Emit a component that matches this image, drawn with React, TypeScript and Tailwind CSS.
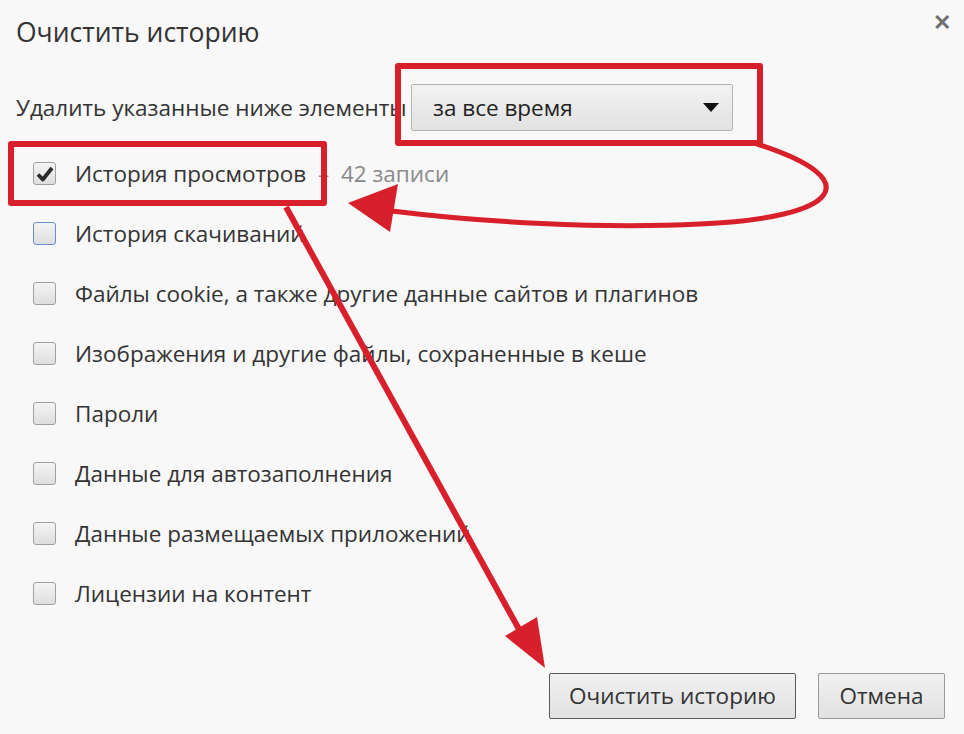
import { useState } from "react";

const items = [
  "История просмотров",
  "История скачиваний",
  "Файлы cookie, а также другие данные сайтов и плагинов",
  "Изображения и другие файлы, сохраненные в кеше",
  "Пароли",
  "Данные для автозаполнения",
  "Данные размещаемых приложений",
  "Лицензии на контент",
];

function Checkbox({ checked, focused }: { checked: boolean; focused?: boolean }) {
  return (
    <span
      className={`flex h-[23px] w-[23px] shrink-0 items-center justify-center rounded-[3px] border bg-linear-to-b from-[#f4f4f4] to-[#dedede] ${
        focused ? "border-[#6a8ccf]" : "border-[#a0a0a0]"
      }`}
    >
      {checked && (
        <svg width="18" height="16" viewBox="0 0 18 16">
          <path d="M2 8.5 L6.8 13.5 L16 2" fill="none" stroke="#2b2b2b" strokeWidth="3.8" strokeLinejoin="round" />
        </svg>
      )}
    </span>
  );
}

export default function App() {
  const [checked, setChecked] = useState<boolean[]>([true, false, false, false, false, false, false, false]);

  return (
    <div
      className="relative h-[734px] w-[964px] overflow-hidden bg-[#f8f8f8] text-[#333]"
      style={{ fontFamily: '"Open Sans", "Noto Sans", sans-serif' }}
    >
      <div className="flex h-full flex-col px-4 pt-[12px]">
        {/* Header */}
        <div className="flex items-start justify-between">
          <h1 className="text-[26.5px] font-normal leading-[40px] text-[#333]">Очистить историю</h1>
          <button className="mr-[-3px] mt-[-2px] text-[22px] font-bold leading-none text-[#707070]">✕</button>
        </div>

        {/* Time range */}
        <div className="mt-[32px] flex items-center">
          <span className="w-[395px] overflow-hidden whitespace-nowrap text-[22.5px] leading-[30px]">Удалить указанные ниже элементы</span>
          <div className="flex h-[47px] w-[322px] items-center justify-between rounded-[2px] border border-[#b5b5b5] bg-linear-to-b from-[#f2f2f2] to-[#e2e2e2] pl-[21px] pr-[13px]">
            <span className="text-[22.5px] text-[#222]">за все время</span>
            <svg width="16" height="10" viewBox="0 0 16 10">
              <path d="M0 0 L16 0 L8 9 Z" fill="#111" />
            </svg>
          </div>
        </div>

        {/* Items */}
        <div className="mt-[31px] flex flex-col gap-[37px] pl-[17px]">
          {items.map((label, i) => (
            <label
              key={label}
              className="flex h-[23px] cursor-pointer items-center gap-[19px]"
              onClick={() => setChecked((c) => c.map((v, j) => (j === i ? !v : v)))}
            >
              <Checkbox checked={checked[i]} focused={i === 1} />
              <span className="whitespace-nowrap text-[22.5px] leading-[30px] text-[#333]">
                {label}
                {i === 0 && <span className="text-[#8a8a8a]">&nbsp;&nbsp;–&nbsp;&nbsp;42 записи</span>}
              </span>
            </label>
          ))}
        </div>

        {/* Buttons */}
        <div className="mt-auto mb-[15px] flex justify-end gap-[22px] pr-[3px]">
          <button className="h-[46px] w-[247px] rounded-[2px] border border-[#5a5a5a] bg-linear-to-b from-[#f1f1f1] to-[#e1e1e1] text-[22.5px] text-[#333]">
            Очистить историю
          </button>
          <button className="h-[46px] w-[127px] rounded-[2px] border border-[#9a9a9a] bg-linear-to-b from-[#f1f1f1] to-[#e1e1e1] text-[22.5px] text-[#333]">
            Отмена
          </button>
        </div>
      </div>

      {/* Annotation overlay */}
      <svg className="pointer-events-none absolute inset-0" width="964" height="734" viewBox="0 0 964 734">
        <g fill="none" stroke="#d7202b" strokeWidth="6" strokeLinejoin="round">
          <rect x="398" y="66" width="362" height="77" />
          <rect x="11" y="144" width="313" height="59" />
          <path d="M757 144 C 870 180, 840 218, 700 224 C 600 229, 480 222, 392 211" strokeWidth="5" />
          <path d="M286 207 L 526 642" strokeWidth="6" />
        </g>
        <g fill="#d7202b">
          <path d="M348 203 L 398 184 L 390 232 Z" />
          <path d="M545 668 L 505 636 L 537 617 Z" />
        </g>
      </svg>
    </div>
  );
}
